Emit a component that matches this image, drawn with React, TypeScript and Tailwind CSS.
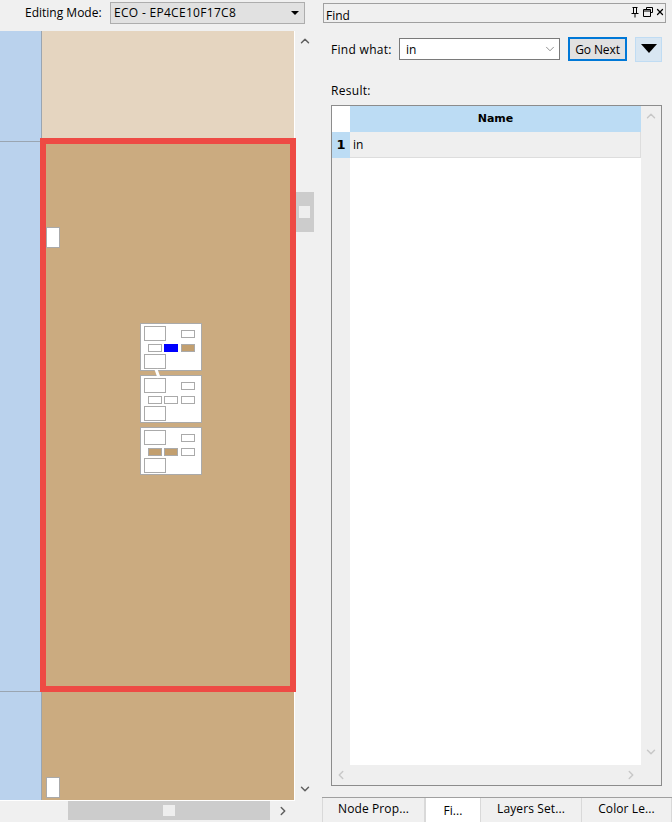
import React from 'react';
import { ChevronDown, ChevronLeft, ChevronRight, ChevronUp, X } from 'lucide-react';

const Node: React.FC<{ className: string; fill?: 'blue' | 'tan' }> = ({ className, fill }) => {
  const bg = fill === 'blue' ? 'bg-[#0000ff] border-[#0000ff]' : fill === 'tan' ? 'bg-[#c29f6f] border-[#aaaaaa]' : 'bg-white border-[#aaaaaa]';
  return <div className={`absolute border ${bg} ${className}`} />;
};

const MiniCard: React.FC<{ fills: ('blue' | 'tan' | undefined)[] }> = ({ fills }) => (
  <div className="relative w-[62px] h-[48px] bg-white border border-[#aaaaaa]">
    <Node className="left-[3px] top-[2px] w-[22px] h-[15px]" />
    <Node className="left-[40px] top-[6px] w-[14px] h-[8px]" />
    <Node className="left-[7px] top-[20px] w-[14px] h-[8px]" fill={fills[0]} />
    <Node className="left-[23px] top-[20px] w-[14px] h-[8px]" fill={fills[1]} />
    <Node className="left-[40px] top-[20px] w-[14px] h-[8px]" fill={fills[2]} />
    <Node className="left-[3px] top-[30px] w-[22px] h-[15px]" />
  </div>
);

const Tab: React.FC<{ label: string; className: string; active?: boolean }> = ({ label, className, active }) => (
  <div
    className={`flex items-center justify-center border-r border-[#d9d9d9] tracking-[0.1px] ${className} ${
      active ? 'bg-white border-l pt-[1px]' : 'pb-[3px]'
    }`}
  >
    {label}
  </div>
);

export default function App() {
  return (
    <div className="flex w-[672px] h-[822px] overflow-hidden bg-[#f0f0f0] text-black text-[12px] font-['Open_Sans','Noto_Sans',sans-serif]">
      {/* editor side */}
      <div className="flex flex-col w-[322px] shrink-0">
        <div className="flex items-center h-[31px] pl-[25px] pb-[5px] shrink-0">
          <span className="w-[85px] shrink-0">Editing Mode:</span>
          <div className="flex items-center justify-between w-[195px] h-[22px] px-[3px] bg-[#e1e1e1] border border-[#adadad]">
            <span className="tracking-[0.3px]">ECO - EP4CE10F17C8</span>
            <svg width="9" height="5" viewBox="0 0 9 5" className="mr-[1px]">
              <path d="M0 0h8L4 4z" fill="#000" />
            </svg>
          </div>
        </div>

        <div className="flex flex-1 min-h-0">
          {/* ruler */}
          <div className="flex flex-col w-[42px] h-[769px] shrink-0 bg-[#bad2ed] border-r border-[#9aa5b1]">
            <div className="h-[111px] border-b border-[#9aa5b1]" />
            <div className="h-[550px] border-b border-[#9aa5b1]" />
          </div>

          {/* canvas */}
          <div className="flex flex-col w-[253px] h-[769px] shrink-0 border-r border-white">
            <div className="h-[107px] bg-[#e5d5c0]" />
            <div className="relative flex-1 bg-[#cbab80]">
              <div className="absolute -left-[2px] top-0 w-[256px] h-[554px] border-[6px] border-[#ee4a44]" />
              <div className="absolute left-[4px] top-[89px] w-[14px] h-[21px] bg-white border border-[#aaaaaa]" />
              <div className="absolute left-[4px] top-[639px] w-[14px] h-[21px] bg-white border border-[#aaaaaa]" />
              <div className="absolute left-[98px] top-[185px] flex flex-col gap-[4px]">
                <MiniCard fills={[undefined, 'blue', 'tan']} />
                <MiniCard fills={[undefined, undefined, undefined]} />
                <MiniCard fills={['tan', 'tan', undefined]} />
              </div>
              <div className="absolute left-[114px] top-[231px] w-[3px] h-[9px] bg-white rotate-[-20deg]" />
            </div>
          </div>

          {/* vertical scrollbar */}
          <div className="flex flex-col items-center w-[18px] h-[769px] ml-[1px] shrink-0 pt-[3px] text-[#5f5f5f]">
            <ChevronUp size={14} strokeWidth={2.5} />
            <div className="flex items-center justify-center w-full h-[40px] mt-[144px] pr-[2px] bg-[#cccccc]">
              <div className="w-[11px] h-[12px] bg-[#eeeeee]" />
            </div>
            <ChevronDown size={14} strokeWidth={2.5} className="mt-[550px]" />
          </div>
        </div>

        {/* horizontal scrollbar */}
        <div className="w-[295px] h-px bg-white shrink-0" />
        <div className="flex items-center h-[21px] pl-[68px] pb-[2px] shrink-0 text-[#5f5f5f]">
          <div className="flex items-center justify-center w-[202px] h-[19px] bg-[#cccccc]">
            <div className="w-[12px] h-[11px] bg-[#eeeeee]" />
          </div>
          <ChevronRight size={14} strokeWidth={2.5} className="ml-[6px]" />
        </div>
      </div>

      {/* find panel */}
      <div className="flex flex-col flex-1 min-w-0">
        <div className="flex items-center justify-between h-[20px] mt-[3px] ml-px mr-[6px] pl-[2px] border border-[#a0a0a0] shrink-0">
          <span className="mt-[5px]">Find</span>
          <div className="flex items-center gap-[1px] mb-[3px]">
            <svg width="12" height="12" viewBox="0 0 12 12" fill="none" stroke="#000">
              <path d="M3.5 1.5h5M4.5 1.5v6M7.5 1.5v6M2.5 7.5h7M6 7.5v4" />
            </svg>
            <svg width="12" height="12" viewBox="0 0 12 12" fill="none" stroke="#000">
              <path d="M4.5 3.5v-2h6v5h-2" />
              <path d="M1.5 3.5h7v7h-7zM1.5 5h7" />
            </svg>
            <X size={10} strokeWidth={3} />
          </div>
        </div>

        <div className="flex items-center h-[26px] mt-[13px] ml-[9px] shrink-0">
          <span className="w-[68px] shrink-0 pt-[1px] tracking-[0.3px]">Find what:</span>
          <div className="flex items-center justify-between w-[161px] h-[22px] pl-[6px] pr-[2px] bg-white border border-[#7a7a7a]">
            <span className="pt-[1px]">in</span>
            <ChevronDown size={14} strokeWidth={1} className="text-[#444444]" />
          </div>
          <div className="flex items-center justify-center w-[59px] h-[24px] ml-[8px] pt-[1px] bg-[#e1e1e1] border-2 border-[#0078d7] tracking-[-0.1px]">
            Go Next
          </div>
          <div className="flex items-center justify-center w-[27px] h-[25px] ml-[8px] pb-[2px] bg-[#d8e6f2] border border-[#c0dcf3]">
            <svg width="16" height="9" viewBox="0 0 16 9">
              <path d="M0 0h16L8 9z" fill="#000" />
            </svg>
          </div>
        </div>

        <div className="mt-[20px] ml-[9px] h-[20px] shrink-0 tracking-[0.3px]">Result:</div>

        {/* results table */}
        <div className="flex flex-col w-[331px] h-[681px] mt-[3px] ml-[9px] border border-[#8c8c8c] bg-[#efefef] shrink-0">
          <div className="flex flex-1 min-h-0">
            <div className="flex flex-col w-[18px] shrink-0">
              <div className="h-[26px] bg-white" />
              <div className="flex items-center justify-center h-[26px] bg-[#bcdcf4] font-bold text-[13px] font-['DejaVu_Sans',sans-serif]">
                1
              </div>
            </div>
            <div className="flex flex-col w-[291px] shrink-0 bg-white">
              <div className="flex items-center justify-center h-[26px] bg-[#bcdcf4] font-bold font-['DejaVu_Sans',sans-serif] text-[11px]">
                Name
              </div>
              <div className="flex items-center h-[26px] pl-[3px] bg-[#efefef] border-r border-b border-[#dddddd]">in</div>
            </div>
            <div className="flex flex-col items-center justify-between flex-1 py-[3px] text-[#c8c8c8]">
              <ChevronUp size={14} strokeWidth={2.5} />
              <ChevronDown size={14} strokeWidth={2.5} className="mb-[3px]" />
            </div>
          </div>
          <div className="flex items-center justify-between h-[20px] pl-[2px] pr-[23px] shrink-0 text-[#c8c8c8]">
            <ChevronLeft size={14} strokeWidth={2.5} />
            <ChevronRight size={14} strokeWidth={2.5} />
          </div>
        </div>

        {/* tabs */}
        <div className="flex h-[25px] mt-[11px] border-t border-[#a0a0a0] shrink-0">
          <Tab label="Node Prop..." className="w-[103px] border-l" />
          <Tab label="Fi..." className="w-[56px]" active />
          <Tab label="Layers Set..." className="w-[101px]" />
          <Tab label="Color Le..." className="flex-1" />
        </div>
      </div>
    </div>
  );
}
